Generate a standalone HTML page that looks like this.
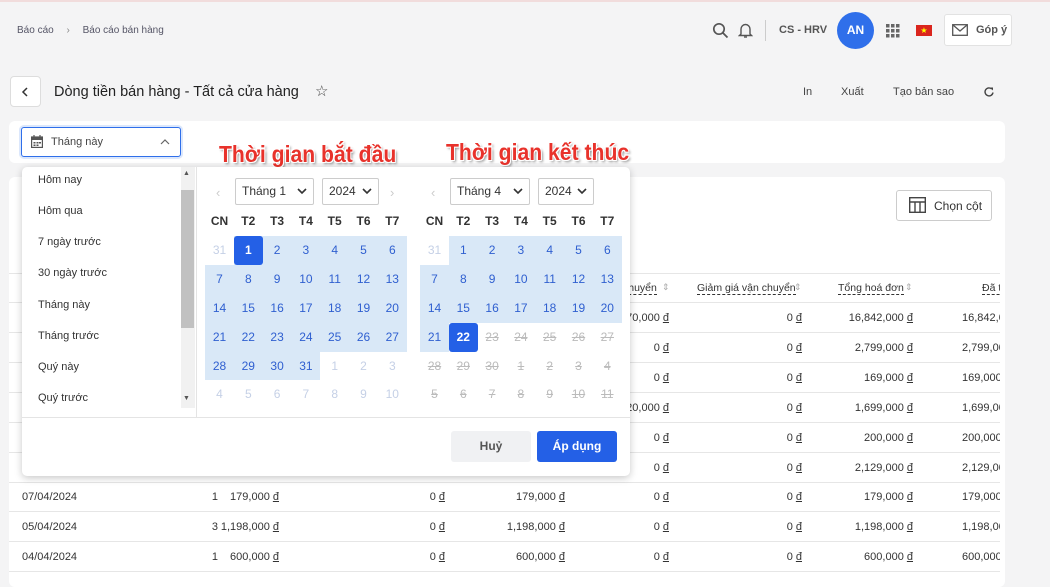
<!DOCTYPE html>
<html><head><meta charset="utf-8">
<style>
*{box-sizing:border-box;margin:0;padding:0}
body{width:1050px;height:575px;overflow:hidden;background:#f4f4f5;font-family:"Liberation Sans",sans-serif;position:relative;color:#333}
.a{position:absolute}
.t{position:absolute;white-space:nowrap}
.card{position:absolute;background:#fff;border-radius:6px}
.row{position:absolute;left:0;width:1000px;height:30px;border-bottom:1px solid #e6e6e6;font-size:11px;color:#333}
.row span{position:absolute;top:9px;white-space:nowrap}
.u{text-decoration:underline}
.cal div{position:absolute;width:29px;height:29px;line-height:29px;text-align:center;font-size:12px;color:#2f5fd0}
.hd{font-weight:bold;color:#333 !important}
.off{color:#c5d0e6 !important}
.st{color:#bbb !important;text-decoration:line-through}
.sel{background:#2460e6;color:#fff !important;font-weight:bold;border-radius:3px}
.dd{position:absolute;height:27px;border:1px solid #ccc;border-radius:2px;background:#fff;font-size:12px;line-height:25px;padding-left:6px;color:#333}
.dd svg{position:absolute;right:6px;top:9px}
.li{position:absolute;left:16px;font-size:11px;color:#333}
.rl{font-family:"Liberation Sans Narrow","Liberation Sans",sans-serif;font-weight:bold;font-size:23px;color:#e8322b;transform:scaleX(0.92);transform-origin:0 0;text-shadow:1px 1px 0 #fff,-1px -1px 0 #fff,1px -1px 0 #fff,-1px 1px 0 #fff,2px 2px 3px rgba(0,0,0,.45)}
.hs{font-size:10.5px;border-bottom:1px dashed #333;line-height:12px}
</style></head><body>
<div class="a" style="left:0;top:0;width:1050px;height:2px;background:#f1dcdc"></div>

<div class="t" style="left:17px;top:25px;font-size:10px;color:#556">Báo cáo <span style="margin:0 10px;color:#888">›</span> Báo cáo bán hàng</div>

<svg class="a" style="left:712px;top:22px" width="17" height="17" viewBox="0 0 17 17"><circle cx="7" cy="7" r="5.2" fill="none" stroke="#555" stroke-width="1.7"/><line x1="11" y1="11" x2="15.5" y2="15.5" stroke="#555" stroke-width="1.8"/></svg>
<svg class="a" style="left:738px;top:22px" width="15" height="17" viewBox="0 0 15 17"><path d="M3 12V7a4.5 4.5 0 0 1 9 0v5l1.5 1.5h-12z" fill="none" stroke="#555" stroke-width="1.4"/><path d="M6 15h3" stroke="#555" stroke-width="1.4"/></svg>
<div class="a" style="left:765px;top:20px;width:1px;height:21px;background:#ccc"></div>
<div class="t" style="left:779px;top:24px;font-size:11px;font-weight:bold;color:#555">CS - HRV</div>
<div class="a" style="left:837px;top:12px;width:37px;height:37px;border-radius:50%;background:#2f6fea;color:#fff;font-weight:bold;font-size:12px;text-align:center;line-height:37px">AN</div>
<svg class="a" style="left:886px;top:24px" width="14" height="14"><g fill="#666"><rect x="0" y="0" width="3.5" height="3.5"/><rect x="5" y="0" width="3.5" height="3.5"/><rect x="10" y="0" width="3.5" height="3.5"/><rect x="0" y="5" width="3.5" height="3.5"/><rect x="5" y="5" width="3.5" height="3.5"/><rect x="10" y="5" width="3.5" height="3.5"/><rect x="0" y="10" width="3.5" height="3.5"/><rect x="5" y="10" width="3.5" height="3.5"/><rect x="10" y="10" width="3.5" height="3.5"/></g></svg>
<div class="a" style="left:916px;top:25px;width:16px;height:11px;background:#da251d;color:#ff0;font-size:8px;line-height:11px;text-align:center">★</div>
<div class="a" style="left:944px;top:14px;width:68px;height:32px;background:#fff;border:1px solid #e2e2e2;border-radius:3px"></div>
<svg class="a" style="left:952px;top:24px" width="16" height="12"><rect x="0.7" y="0.7" width="14.6" height="10.6" fill="none" stroke="#555" stroke-width="1.3"/><path d="M1 1l7 6 7-6" fill="none" stroke="#555" stroke-width="1.3"/></svg>
<div class="t" style="left:976px;top:24px;font-size:11px;font-weight:bold;color:#555">Góp ý</div>

<div class="a" style="left:10px;top:76px;width:31px;height:31px;background:#fff;border:1px solid #ddd;border-radius:4px"></div>
<svg class="a" style="left:21px;top:87px" width="8" height="10"><path d="M6 1L2 5l4 4" fill="none" stroke="#333" stroke-width="1.5"/></svg>
<div class="t" style="left:54px;top:84px;font-size:14.5px;color:#222">Dòng tiền bán hàng - Tất cả cửa hàng</div>
<div class="t" style="left:315px;top:82px;font-size:15px;color:#444">☆</div>
<div class="t" style="left:803px;top:86px;font-size:11px;color:#444">In</div>
<div class="t" style="left:841px;top:86px;font-size:11px;color:#444">Xuất</div>
<div class="t" style="left:893px;top:86px;font-size:11px;color:#444">Tạo bản sao</div>
<svg class="a" style="left:983px;top:86px" width="12" height="12" viewBox="0 0 12 12"><path d="M10 6.5A4 4 0 1 1 8.8 3" fill="none" stroke="#444" stroke-width="1.4"/><path d="M7 1.5h3v3z" fill="#444"/></svg>

<div class="card" style="left:9px;top:121px;width:996px;height:42px"></div>
<div class="a" style="left:21px;top:127px;width:160px;height:30px;border:1px solid #2f6fea;border-radius:3px;background:#fff;box-shadow:0 0 0 2px #dbe7fc"></div>
<svg class="a" style="left:31px;top:135px" width="12" height="13"><rect x="0.6" y="2" width="10.8" height="10.4" fill="none" stroke="#555" stroke-width="1.2"/><rect x="0.6" y="2" width="10.8" height="3" fill="#555"/><path d="M3 0v3M9 0v3" stroke="#555" stroke-width="1.2"/><g fill="#555"><rect x="2.5" y="7" width="2" height="1.5"/><rect x="5.5" y="7" width="2" height="1.5"/><rect x="8" y="7" width="2" height="1.5"/><rect x="2.5" y="9.5" width="2" height="1.5"/><rect x="5.5" y="9.5" width="2" height="1.5"/></g></svg>
<div class="t" style="left:51px;top:136px;font-size:11px;color:#444">Tháng này</div>
<svg class="a" style="left:160px;top:138px" width="10" height="7"><path d="M1 6l4-4 4 4" fill="none" stroke="#666" stroke-width="1.2"/></svg>

<div class="card" style="left:9px;top:177px;width:996px;height:410px">
 <div class="a" style="left:887px;top:13px;width:96px;height:31px;border:1px solid #ccc;border-radius:3px"></div>
 <svg class="a" style="left:900px;top:20px" width="17" height="16"><rect x="0.7" y="0.7" width="15.6" height="14.6" fill="none" stroke="#444" stroke-width="1.4"/><path d="M1 5h15M6 5v10M11 5v10" stroke="#444" stroke-width="1.4"/></svg>
 <div class="t" style="left:925px;top:22px;font-size:12px;color:#333">Chọn cột</div>
 <div class="a" style="left:0;top:0;width:991px;height:410px;overflow:hidden">
 <div class="a" style="left:0;top:96px;width:996px;height:1px;background:#e6e6e6"></div>
 <div class="row" style="top:96px;height:30px">
  <span class="hs" style="left:614px">chuyển</span><span style="left:653px;color:#aaa;font-size:9px">⇕</span>
  <span class="hs" style="left:688px">Giảm giá vận chuyển</span><span style="left:785px;color:#aaa;font-size:9px">⇕</span>
  <span class="hs" style="left:829px">Tổng hoá đơn</span><span style="left:896px;color:#aaa;font-size:9px">⇕</span>
  <span class="hs" style="left:973px">Đã thanh toán</span>
 </div>
 <div id="rows"></div>
 </div>
</div>

<div class="rl t" style="left:219px;top:141px">Thời gian bắt đầu</div>
<div class="rl t" style="left:446px;top:139px">Thời gian kết thúc</div>

<div class="a" style="left:22px;top:167px;width:608px;height:309px;background:#fff;border-radius:5px;box-shadow:0 2px 8px rgba(0,0,0,.22)">
 <div class="li" style="top:7px">Hôm nay</div>
 <div class="li" style="top:38px">Hôm qua</div>
 <div class="li" style="top:69px">7 ngày trước</div>
 <div class="li" style="top:100px">30 ngày trước</div>
 <div class="li" style="top:132px">Tháng này</div>
 <div class="li" style="top:163px">Tháng trước</div>
 <div class="li" style="top:194px">Quý này</div>
 <div class="li" style="top:225px">Quý trước</div>
 <div class="a" style="left:159px;top:0;width:14px;height:241px;background:#f1f1f1"></div>
 <div class="a" style="left:159px;top:23px;width:13px;height:138px;background:#c1c1c1"></div>
 <div class="t" style="left:161px;top:3px;font-size:7px;color:#555">▲</div>
 <div class="t" style="left:161px;top:228px;font-size:7px;color:#555">▼</div>
 <div class="a" style="left:174px;top:0;width:1px;height:250px;background:#e4e4e4"></div>
 <div class="a" style="left:0;top:250px;width:608px;height:1px;background:#e4e4e4"></div>
 <div class="a" style="left:429px;top:264px;width:80px;height:31px;background:#f0f1f3;border-radius:3px;text-align:center;line-height:31px;font-size:12px;font-weight:bold;color:#555">Huỷ</div>
 <div class="a" style="left:515px;top:264px;width:80px;height:31px;background:#2460e6;border-radius:3px;text-align:center;line-height:31px;font-size:12px;font-weight:bold;color:#fff">Áp dụng</div>
</div>

<div class="t" style="left:216px;top:185px;color:#ccc;font-size:13px">‹</div>
<div class="dd" style="left:235px;top:178px;width:79px">Tháng 1<svg width="10" height="7"><path d="M1 1l4 4 4-4" fill="none" stroke="#333" stroke-width="1.6"/></svg></div>
<div class="dd" style="left:322px;top:178px;width:57px">2024<svg width="10" height="7"><path d="M1 1l4 4 4-4" fill="none" stroke="#333" stroke-width="1.6"/></svg></div>
<div class="t" style="left:390px;top:185px;color:#ccc;font-size:13px">›</div>
<div class="t" style="left:431px;top:185px;color:#ccc;font-size:13px">‹</div>
<div class="dd" style="left:450px;top:178px;width:80px">Tháng 4<svg width="10" height="7"><path d="M1 1l4 4 4-4" fill="none" stroke="#333" stroke-width="1.6"/></svg></div>
<div class="dd" style="left:538px;top:178px;width:56px">2024<svg width="10" height="7"><path d="M1 1l4 4 4-4" fill="none" stroke="#333" stroke-width="1.6"/></svg></div>

<div class="a" style="left:234px;top:236px;width:173px;height:29px;background:#d9e8f7"></div>
<div class="a" style="left:205px;top:265px;width:202px;height:87px;background:#d9e8f7"></div>
<div class="a" style="left:205px;top:352px;width:115px;height:28px;background:#d9e8f7"></div>
<div class="a" style="left:449px;top:236px;width:173px;height:29px;background:#d9e8f7"></div>
<div class="a" style="left:420px;top:265px;width:202px;height:58px;background:#d9e8f7"></div>
<div class="a" style="left:420px;top:323px;width:29px;height:29px;background:#d9e8f7"></div>

<div class="cal" id="c1"></div>
<div class="cal" id="c2"></div>

<script>
function cal(id,x0,rows){var h='',hd=['CN','T2','T3','T4','T5','T6','T7'],ys=[207,236,265,294,323,352,380];
for(var i=0;i<7;i++)h+='<div class="hd" style="left:'+(x0+i*28.8)+'px;top:'+ys[0]+'px">'+hd[i]+'</div>';
rows.forEach(function(r,ri){r.forEach(function(c,ci){h+='<div class="'+(c[1]||'')+'" style="left:'+(x0+ci*28.8)+'px;top:'+ys[ri+1]+'px">'+c[0]+'</div>';});});
document.getElementById(id).innerHTML=h;}
function R(a,cls){return a.map(function(v,i){return [v,typeof cls=='function'?cls(v,i):cls];});}
cal('c1',205,[
 R([31,1,2,3,4,5,6],function(v,i){return i==0?'off':i==1?'sel':''}),
 R([7,8,9,10,11,12,13],''),R([14,15,16,17,18,19,20],''),R([21,22,23,24,25,26,27],''),
 R([28,29,30,31,1,2,3],function(v,i){return i>3?'off':''}),
 R([4,5,6,7,8,9,10],'off')]);
cal('c2',420,[
 R([31,1,2,3,4,5,6],function(v,i){return i==0?'off':''}),
 R([7,8,9,10,11,12,13],''),R([14,15,16,17,18,19,20],''),
 R([21,22,23,24,25,26,27],function(v,i){return i==1?'sel':i>1?'st':''}),
 R([28,29,30,1,2,3,4],'st'),R([5,6,7,8,9,10,11],'st')]);
var d=[['10/04/2024','12','16,772,000','0','16,772,000','70,000','0','16,842,000'],
['09/04/2024','2','2,799,000','0','2,799,000','0','0','2,799,000'],
['08/04/2024','1','169,000','0','169,000','0','0','169,000'],
['08/04/2024','1','1,679,000','0','1,679,000','20,000','0','1,699,000'],
['08/04/2024','1','200,000','0','200,000','0','0','200,000'],
['08/04/2024','2','2,129,000','0','2,129,000','0','0','2,129,000'],
['07/04/2024','1','179,000','0','179,000','0','0','179,000'],
['05/04/2024','3','1,198,000','0','1,198,000','0','0','1,198,000'],
['04/04/2024','1','600,000','0','600,000','0','0','600,000']];
var h='';d.forEach(function(r,i){var t=126+i*29.9;
var rt=[null,791,730,564,444,340,207,96];
h+='<div class="row" style="top:'+t+'px"><span style="left:13px">'+r[0]+'</span><span style="right:791px">'+r[1]+'</span>';
for(var k=2;k<8;k++)h+='<span style="right:'+rt[k]+'px">'+r[k]+' <span class="u" style="position:static">đ</span></span>';
h+='<span style="left:953px">'+r[7]+' <span class="u" style="position:static">đ</span></span></div>';});
document.getElementById('rows').innerHTML=h;
</script>
</body></html>
